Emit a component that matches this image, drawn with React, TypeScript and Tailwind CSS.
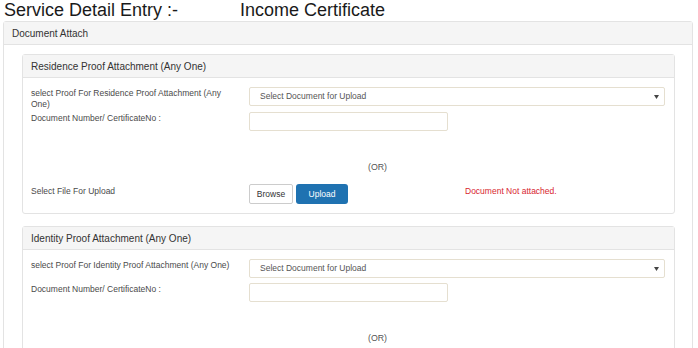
import React from 'react'

interface AttachmentPanelProps {
  title: string
  selectLabel: string
}

function Caret() {
  return (
    <svg width="5" height="4" viewBox="0 0 5 4" className="shrink-0">
      <path d="M0 0 L5 0 L2.5 4 Z" fill="#444" />
    </svg>
  )
}

function AttachmentPanel({ title, selectLabel }: AttachmentPanelProps) {
  return (
    <div className="border border-[#e3e3e3] rounded-[3px] bg-white">
      <div className="h-[23px] flex items-center px-[8px] bg-[#f5f5f5] border-b border-[#e3e3e3] text-[10px] text-[#333]">
        {title}
      </div>
      <div className="pl-[8px] pr-[9px] pt-[9px] pb-[9px] text-[8.5px] leading-[11px] text-[#4a4a4a]">
        <div className="grid grid-cols-[218px_1fr] gap-y-[2px]">
          {/* Proof select */}
          <div className="pr-[14px] pt-[1px]">{selectLabel}</div>
          <div className="mb-[3px] h-[19px] flex items-center justify-between pl-[10px] pr-[5px] border border-[#e5dfd0] rounded-[2px] text-[#555]">
            <span>Select Document for Upload</span>
            <Caret />
          </div>

          {/* Document number */}
          <div className="pt-[1px]">Document Number/ CertificateNo :</div>
          <div className="w-[199px] h-[19px] border border-[#e5dfd0] rounded-[2px]" />
        </div>

        <div className="mt-[31px] pl-[337px] text-[8.8px] text-[#555]">(OR)</div>

        <div className="mt-[11px] flex items-start">
          <div className="w-[218px] pt-[2px]">Select File For Upload</div>
          <div className="flex gap-[3px]">
            <div className="w-[44px] h-[20px] flex items-center justify-center border border-[#ccc] rounded-[2px] bg-white text-[#333]">
              Browse
            </div>
            <div className="w-[52px] h-[20px] flex items-center justify-center rounded-[3px] bg-[#1f72b1] text-white">
              Upload
            </div>
          </div>
          <div className="ml-[117px] pt-[2px] text-[#d8262f]">Document Not attached.</div>
        </div>
      </div>
    </div>
  )
}

export default function App() {
  return (
    <div className="w-[698px] h-[348px] overflow-hidden bg-white font-['Liberation_Sans',Arial,sans-serif] text-[#222]">
      {/* Page title */}
      <div className="h-[21px] flex items-center pl-[4px] text-[18px] leading-[21px] text-[#1a1a1a]">
        <span className="w-[236px]">Service Detail Entry :-</span>
        <span>Income Certificate</span>
      </div>

      <div className="ml-[3px] mr-[5px] border border-[#e3e3e3] rounded-[3px] h-[400px]">
        <div className="h-[23px] flex items-center px-[8px] bg-[#f5f5f5] border-b border-[#e3e3e3] text-[10px] text-[#333]">
          Document Attach
        </div>
        <div className="pl-[18px] pr-[17px] pt-[9px]">
          <AttachmentPanel
            title="Residence Proof Attachment (Any One)"
            selectLabel="select Proof For Residence Proof Attachment (Any One)"
          />
          <div className="mt-[12px]">
            <AttachmentPanel
              title="Identity Proof Attachment (Any One)"
              selectLabel="select Proof For Identity Proof Attachment (Any One)"
            />
          </div>
        </div>
      </div>
    </div>
  )
}
